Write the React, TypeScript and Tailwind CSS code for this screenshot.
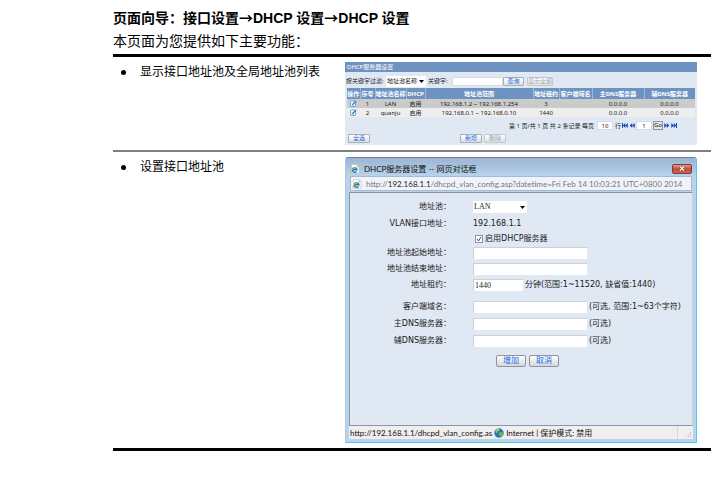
import React, { useState } from 'react';

const POOLS = [
    { id: 1, name: 'LAN', dhcp: '启用', range: '192.168.1.2 ~ 192.168.1.254', lease: '3', domain: '', dns1: '0.0.0.0', dns2: '0.0.0.0' },
    { id: 2, name: 'quanju', dhcp: '启用', range: '192.168.0.1 ~ 192.168.0.10', lease: '1440', domain: '', dns1: '0.0.0.0', dns2: '0.0.0.0' },
];

const COLUMNS = [
    { label: '操作', width: 'w-[14px]' },
    { label: '序号', width: 'w-[15px]' },
    { label: '地址池名称', width: 'w-[31px]' },
    { label: 'DHCP', width: 'w-[19px]' },
    { label: '地址池范围', width: '' },
    { label: '地址租约', width: 'w-[26px]' },
    { label: '客户端域名', width: 'w-[33px]' },
    { label: '主DNS服务器', width: 'w-[52px]' },
    { label: '辅DNS服务器', width: 'w-[52px]' },
];

const EditIcon: React.FC = () => (
    <svg className="block w-[7px] h-[7px] mx-auto" viewBox="0 0 14 14">
        <rect x="1" y="2" width="10" height="11" rx="1" fill="#f4fbff" stroke="#5a9bd0" strokeWidth="1.6" />
        <path d="M3 10h6M3 7.5h3" stroke="#8fc3e8" strokeWidth="1.2" />
        <path d="M5 9.5L12 2" stroke="#2d7fae" strokeWidth="2.4" />
        <path d="M4 11l1-2.5 1.6 1.4z" fill="#3f9a4a" />
    </svg>
);

const IeIcon: React.FC = () => (
    <svg className="block w-[10px] h-[10px] shrink-0" viewBox="0 0 20 20">
        <path d="M3 1h11l4 4v14H3z" fill="#fdfdfd" stroke="#a9b4c2" strokeWidth="1" />
        <path d="M14 1v4h4" fill="#dfe6ee" stroke="#a9b4c2" strokeWidth="1" />
        <path d="M13.2 14.7A4.600 4.600 0 1 1 14 11.500H5" fill="none" stroke="#1d7fc4" strokeWidth="3" />
        <path d="M2 18C0 14 8 5.500 15.500 6" fill="none" stroke="#f0b428" strokeWidth="2" />
    </svg>
);

const GlobeIcon: React.FC = () => (
    <svg className="block w-[10px] h-[10px] shrink-0" viewBox="0 0 20 20">
        <circle cx="10" cy="10" r="9" fill="#2a6fc0" stroke="#5c7fae" strokeWidth="1" />
        <path d="M4 4c3-3 7-2 8-1l-2 3-3 1-1 4-3-2z" fill="#7fcf5c" />
        <path d="M11 9l5-2 2 3-2 5-4 3-1-4-2-2z" fill="#63c04a" />
        <path d="M5 3c2-1 4-1 5-1" stroke="#c9e6ff" strokeWidth="1.500" fill="none" />
    </svg>
);

// double arrow, "bar" adds the stop line for first / last page
const PageArrow: React.FC<{ bar?: boolean; flip?: boolean }> = ({ bar, flip }) => (
    <svg className="block w-[6px] h-[5px]" viewBox="0 0 12 10" fill="#1747b5">
        <g transform={flip ? 'translate(12 0) scale(-1 1)' : undefined}>
            <path d="M6.500 0v10L1.500 5zM11.500 0v10L6.500 5z" />
            {bar && <path d="M0 0h2v10H0z" />}
        </g>
    </svg>
);

const smallButton = 'h-[9px] rounded-[1px] border border-[#a9afb8] bg-gradient-to-b from-white to-[#dcdfe4] text-[6px] leading-[7px] text-[#1c66dc] disabled:text-[#a5a8ad] disabled:border-[#c3c8cf] whitespace-nowrap';
const pageInput = 'w-4 h-[9px] bg-white border border-[#d5dbe4] text-center text-[6px] leading-[7px]';

const Caret: React.FC = () => (
    <svg className="absolute right-[2px] top-1/2 -mt-px w-[5px] h-[3px] pointer-events-none" viewBox="0 0 5 3">
        <path d="M0 0h5L2.500 3z" fill="#000" />
    </svg>
);

const PoolList: React.FC = () => {
    const [keyword, setKeyword] = useState('');

    return (
        <section className="h-[83px] bg-[#e0e8f4] text-[6px] leading-[8px] text-[#222] font-['Noto_Sans','Noto_Sans_CJK_SC',sans-serif]">
            <h2 className="h-[10px] px-[2px] leading-[10px] bg-[#6e93c1] text-white">DHCP服务器设置</h2>
            <div className="flex items-center h-4 pl-px pt-[2px]">
                <label htmlFor="filter" className="w-10 whitespace-nowrap">按关键字过滤:</label>
                <div className="relative">
                    <select id="filter" className="block appearance-none w-10 h-[11px] pl-px bg-white leading-[11px]">
                        <option>地址池名称</option>
                    </select>
                    <Caret />
                </div>
                <label htmlFor="keyword" className="w-6 ml-[2px]">关键字:</label>
                <input id="keyword" value={keyword} onChange={(e) => setKeyword(e.target.value)} className="w-[51px] h-[9px] bg-white border border-[#d5dbe4]" />
                <button className={`${smallButton} w-[21px]`}>查询</button>
                <button disabled className={`${smallButton} w-[26px] ml-[3px]`}>显示全部</button>
            </div>
            <table className="w-full table-fixed border-collapse text-center border-x-2 border-[#e0e8f4]">
                <thead>
                    <tr className="h-[11px] bg-[#6e93c1] text-white">
                        {COLUMNS.map((col) => (
                            <th key={col.label} className={`${col.width} p-0 font-bold whitespace-nowrap border-r border-[#9db6d6]`}>{col.label}</th>
                        ))}
                    </tr>
                </thead>
                <tbody>
                    {POOLS.map((pool) => (
                        <tr key={pool.id} className="h-[9px] odd:bg-[#cbcbcb] even:bg-[#eeeeee]">
                            <td className="p-0"><EditIcon /></td>
                            <td className="p-0">{pool.id}</td>
                            <td className="p-0">{pool.name}</td>
                            <td className="p-0">{pool.dhcp}</td>
                            <td className="p-0">{pool.range}</td>
                            <td className="p-0">{pool.lease}</td>
                            <td className="p-0">{pool.domain}</td>
                            <td className="p-0">{pool.dns1}</td>
                            <td className="p-0">{pool.dns2}</td>
                        </tr>
                    ))}
                </tbody>
            </table>
            <div className="flex items-center justify-end gap-px h-[9px] mt-[4px] pr-5">
                <span className="mr-[2px] whitespace-nowrap">第 1 页/共 1 页 共 2 条记录 每页</span>
                <input aria-label="每页" defaultValue="10" className={pageInput} />
                <span className="ml-px">行</span>
                <PageArrow bar />
                <PageArrow />
                <input aria-label="页" defaultValue="1" className={pageInput} />
                <button className="w-[10px] h-[9px] border border-[#8f9499] bg-[#e6e6e6] text-[6px] leading-[7px]">Go</button>
                <PageArrow flip />
                <PageArrow bar flip />
            </div>
            <div className="flex h-[9px] mt-[4px] pl-[3px]">
                <button className={`${smallButton} w-[22px]`}>全选</button>
                <button className={`${smallButton} w-[22px] ml-[90px]`}>新增</button>
                <button disabled className={`${smallButton} w-[22px] ml-[2px]`}>删除</button>
            </div>
        </section>
    );
};

interface FieldProps {
    id: string;
    label: string;
    height?: string;
    width?: string;
    value?: string;
    hint?: string;
}

const Field: React.FC<FieldProps> = ({ id, label, height = 'h-4', width = 'w-[114px]', value, hint }) => (
    <div className={`flex items-center ${height}`}>
        <label htmlFor={id} className="w-[101px] mr-[22px] text-right">{label}</label>
        <input id={id} defaultValue={value} className={`${width} h-3 px-px bg-white border-t border-l border-[#c9d0da] font-['Liberation_Serif',serif]`} />
        {hint && <span className="ml-[2px] whitespace-nowrap">{hint}</span>}
    </div>
);

const dialogButton = 'w-[30px] h-3 rounded-[2px] border border-[#8e939b] bg-gradient-to-b from-white to-[#d3d6db] leading-[10px] text-[#1c6be8]';

const PoolDialog: React.FC = () => (
    <section className="flex flex-col h-[286px] border border-t-[#6e7f93] border-l-[#a9c8e4] border-r-[#4fcbe8] border-b-[#4fcbe8] rounded-t-[3px] px-[3px] pb-[3px] bg-[#bad2ea] text-[8px] font-['Lato','Noto_Sans_CJK_SC',sans-serif]">
        <header className="flex items-center gap-[4px] h-[18px] -mx-[3px] px-1 pt-[3px] rounded-t-[2px] bg-gradient-to-b from-[#9ab5d2] to-[#bad2ea]">
            <IeIcon />
            <h2 className="flex-1 text-[#111]">DHCP服务器设置 -- 网页对话框</h2>
            <button aria-label="关闭" className="flex items-center justify-center w-5 h-[10px] rounded-[2px] border border-[#7d3a38] bg-gradient-to-b from-[#dd9a8f] via-[#c5493a] to-[#cf6650]">
                <svg className="w-[6px] h-[5px]" viewBox="0 0 12 10">
                    <path d="M2 1l8 8M10 1L2 9" stroke="#5b3030" strokeWidth="4" />
                    <path d="M2 1l8 8M10 1L2 9" stroke="#fff" strokeWidth="2.500" />
                </svg>
            </button>
        </header>
        <div className="flex items-center gap-[4px] h-[15px] px-px mx-px bg-[#f0f4fa] border border-[#a9bacd] text-[#777] whitespace-nowrap">
            <IeIcon />
            <p>http://<span className="text-[#222]">192.168.1.1</span>/dhcpd_vlan_config.asp?datetime=Fri Feb 14 10:03:21 UTC+0800 2014</p>
        </div>
        <form onSubmit={(e) => e.preventDefault()} className="flex-1 mt-px pt-[6px] bg-[#e0e8f4] border border-[#8796a8] border-r-[#c5d3e3] leading-[10px] text-[#1a1a1a] font-['DejaVu_Sans','Noto_Sans_CJK_SC',sans-serif]">
            <div className="flex items-center h-4">
                <label htmlFor="pool" className="w-[101px] mr-[22px] text-right">地址池：</label>
                <div className="relative">
                    <select id="pool" className="block appearance-none w-[54px] h-3 px-px bg-white font-['Liberation_Serif',serif]">
                        <option>LAN</option>
                    </select>
                    <Caret />
                </div>
            </div>
            <div className="flex items-center h-[17px]">
                <span className="w-[101px] mr-[22px] text-right">VLAN接口地址：</span>
                <span>192.168.1.1</span>
            </div>
            <label className="flex items-center h-[13px] pl-[125px]">
                <input type="checkbox" defaultChecked className="peer sr-only" />
                <span className="flex items-center justify-center w-2 h-2 mr-[2px] border border-[#8f949b] bg-white text-transparent peer-checked:text-[#35518d]">
                    <svg className="w-[6px] h-[6px]" viewBox="0 0 6 6" fill="none" stroke="currentColor">
                        <path d="M1 3l1.500 2L5 1" />
                    </svg>
                </span>
                启用DHCP服务器
            </label>
            <Field id="start" label="地址池起始地址：" />
            <Field id="end" label="地址池结束地址：" />
            <Field id="lease" label="地址租约：" width="w-[50px]" value="1440" hint="分钟(范围:1~11520, 缺省值:1440)" />
            <div className="mt-[5px]">
                <Field id="domain" label="客户端域名：" height="h-[17px]" hint="(可选, 范围:1~63个字符)" />
                <Field id="dns1" label="主DNS服务器：" height="h-[17px]" hint="(可选)" />
                <Field id="dns2" label="辅DNS服务器：" height="h-[17px]" hint="(可选)" />
            </div>
            <div className="flex gap-[3px] mt-[6px] pl-[146px]">
                <button type="submit" className={dialogButton}>增加</button>
                <button type="button" className={dialogButton}>取消</button>
            </div>
        </form>
        <footer className="flex items-center gap-[2px] h-[13px] pl-px bg-[#f0eeee] text-[#111] whitespace-nowrap">
            <span>http://192.168.1.1/dhcpd_vlan_config.as</span>
            <GlobeIcon />
            <span className="flex-1">Internet | 保护模式: 禁用</span>
            <span className="flex items-end justify-end w-4 h-[13px] border-l border-[#d8d8d8]">
                <svg className="w-[7px] h-[7px]" viewBox="0 0 7 7" fill="#bdbdbd">
                    <path d="M4 0h1v1H4zM2 2h1v1H2zM4 2h1v1H4zM0 4h1v1H0zM2 4h1v1H2zM4 4h1v1H4z" />
                </svg>
            </span>
        </footer>
    </section>
);

const Feature: React.FC<{ title: string; children: React.ReactNode }> = ({ title, children }) => (
    <div className="grid grid-cols-[232px_1fr] pt-[5px] pr-[14px] pb-[5px]">
        <div className="flex items-center gap-[14px] h-5 pl-2 text-[12px]">
            <span className="w-[5px] h-[5px] rounded-full bg-black" />
            <span>{title}</span>
        </div>
        {children}
    </div>
);

const Arrow: React.FC = () => <span className="leading-none font-['Noto_Sans_CJK_SC',sans-serif]">→</span>;

const App: React.FC = () => {
    return (
        <main className="min-h-screen bg-white text-black pt-2 pl-[113px] pr-[6px] font-['Liberation_Sans','Noto_Sans_CJK_SC',sans-serif]">
            <h1 className="text-[14px] leading-[20px] font-bold">页面向导：接口设置<Arrow />DHCP 设置<Arrow />DHCP 设置</h1>
            <p className="text-[14px] leading-[26px]">本页面为您提供如下主要功能：</p>
            <div className="border-y-3 border-black">
                <Feature title="显示接口地址池及全局地址池列表">
                    <PoolList />
                </Feature>
                <div className="border-t-2 border-[#808080]">
                    <Feature title="设置接口地址池">
                        <PoolDialog />
                    </Feature>
                </div>
            </div>
        </main>
    );
};

export default App;
